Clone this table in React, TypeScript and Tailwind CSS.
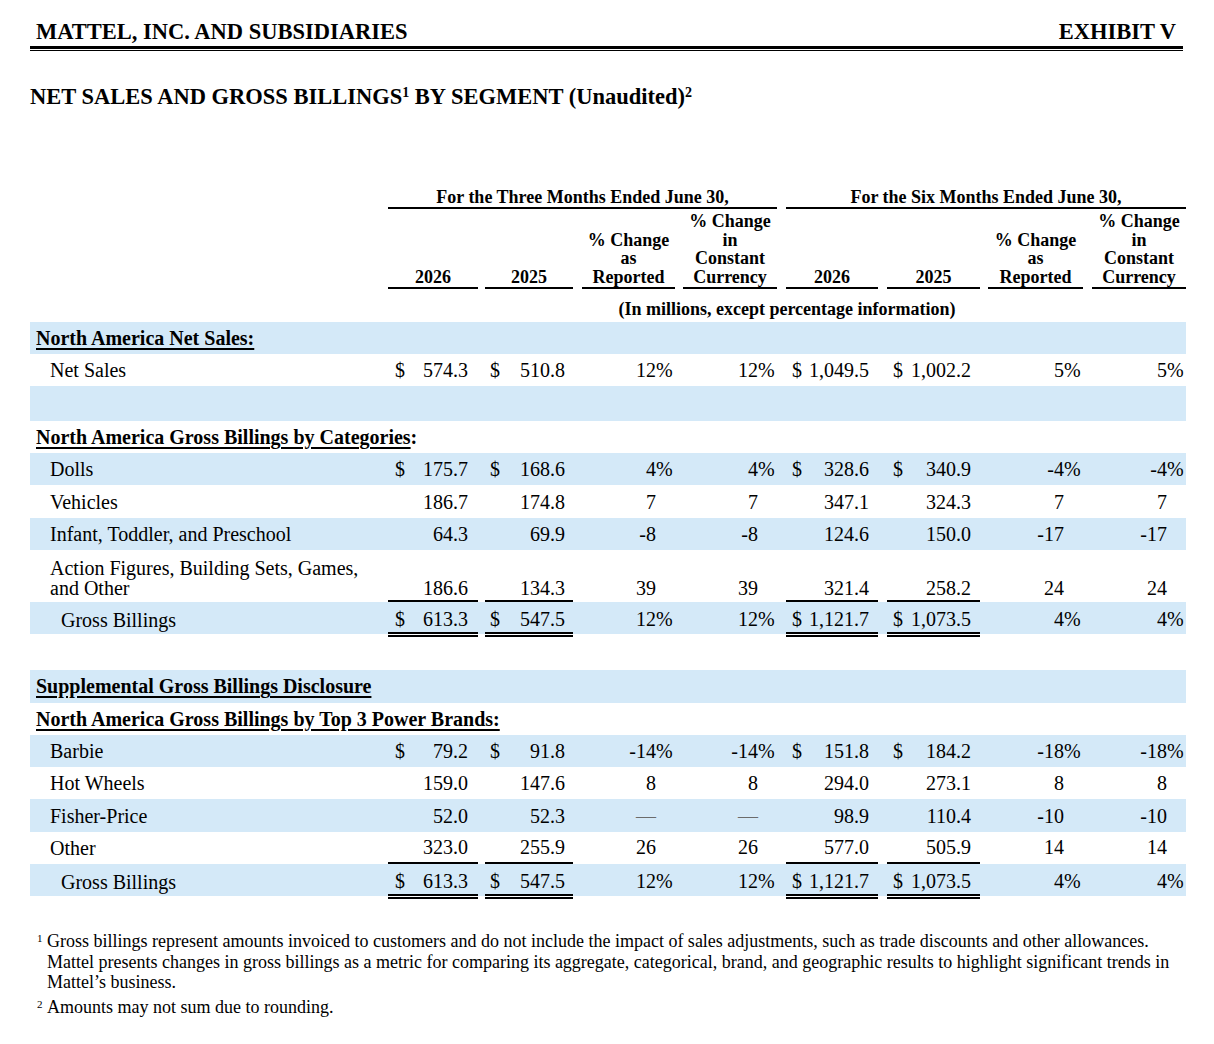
const SHADE = "bg-[#d4e9f8]";

// column boxes (width + gap before) measured from the statement grid
const colCls = [
  "w-[90px]",
  "ml-[7px] w-[88px]",
  "ml-[9px] w-[93px]",
  "ml-[8px] w-[94px]",
  "ml-[9px] w-[92px]",
  "ml-[9px] w-[93px]",
  "ml-[8px] w-[95px]",
  "ml-[9px] w-[94px]",
];
const moneyPad = ["pl-[7px] pr-[10px]", "pl-[5px] pr-[8px]", "", "", "pl-[6px] pr-[9px]", "pl-[6px] pr-[9px]", "", ""];
const isMoney = [true, true, false, false, true, true, false, false];

type Kind = "section" | "item" | "total" | "empty" | "spacer";

type Row = {
  kind: Kind;
  label?: React.ReactNode;
  vals?: string[];
  dollar?: boolean;
  shade?: boolean;
  rule?: "under" | "double";
  tall?: boolean;
};

const gb = ["613.3", "547.5", "12%", "12%", "1,121.7", "1,073.5", "4%", "4%"];

const rows: Row[] = [
  { kind: "section", shade: true, label: <span className="underline">North America Net Sales:</span> },
  { kind: "item", label: "Net Sales", dollar: true, vals: ["574.3", "510.8", "12%", "12%", "1,049.5", "1,002.2", "5%", "5%"] },
  { kind: "empty", shade: true },
  {
    kind: "section",
    label: (
      <>
        <span className="underline">North America Gross Billings by Categories</span>:
      </>
    ),
  },
  { kind: "item", shade: true, label: "Dolls", dollar: true, vals: ["175.7", "168.6", "4%", "4%", "328.6", "340.9", "-4%", "-4%"] },
  { kind: "item", label: "Vehicles", vals: ["186.7", "174.8", "7", "7", "347.1", "324.3", "7", "7"] },
  { kind: "item", shade: true, label: "Infant, Toddler, and Preschool", vals: ["64.3", "69.9", "-8", "-8", "124.6", "150.0", "-17", "-17"] },
  {
    kind: "item",
    tall: true,
    rule: "under",
    label: (
      <>
        Action Figures, Building Sets, Games,
        <br />
        and Other
      </>
    ),
    vals: ["186.6", "134.3", "39", "39", "321.4", "258.2", "24", "24"],
  },
  { kind: "total", shade: true, label: "Gross Billings", dollar: true, rule: "double", vals: gb },
  { kind: "spacer" },
  { kind: "section", shade: true, label: <span className="underline">Supplemental Gross Billings Disclosure</span> },
  { kind: "section", label: <span className="underline">North America Gross Billings by Top 3 Power Brands:</span> },
  { kind: "item", shade: true, label: "Barbie", dollar: true, vals: ["79.2", "91.8", "-14%", "-14%", "151.8", "184.2", "-18%", "-18%"] },
  { kind: "item", label: "Hot Wheels", vals: ["159.0", "147.6", "8", "8", "294.0", "273.1", "8", "8"] },
  { kind: "item", shade: true, label: "Fisher-Price", vals: ["52.0", "52.3", "—", "—", "98.9", "110.4", "-10", "-10"] },
  { kind: "item", label: "Other", rule: "under", vals: ["323.0", "255.9", "26", "26", "577.0", "505.9", "14", "14"] },
  { kind: "total", shade: true, label: "Gross Billings", dollar: true, rule: "double", vals: gb },
];

function ValueCell({ i, v, dollar, rule, tall }: { i: number; v: string; dollar?: boolean; rule?: string; tall?: boolean }) {
  if (isMoney[i]) {
    let ruleCls = "";
    if (rule === "under") ruleCls = tall ? "items-end border-b-2 border-black pb-[2px]" : "items-center border-b-2 border-black";
    else if (rule === "double") ruleCls = "items-center mb-[-3px] border-b-[5px] border-double border-black pt-[4px]";
    else ruleCls = tall ? "items-end pb-[4px]" : "items-center";
    return (
      <div className={`${colCls[i]} flex shrink-0 self-stretch justify-between ${moneyPad[i]} ${ruleCls}`}>
        <span>{dollar ? "$" : ""}</span>
        <span>{v}</span>
      </div>
    );
  }
  const pct = v.endsWith("%");
  const num = pct ? v.slice(0, -1) : v;
  // keep pct figures on the same baseline as the ruled money cells
  let pad = tall ? "items-end pb-[4px]" : "items-center";
  if (!tall && rule === "under") pad = "items-center pb-[2px]";
  if (rule === "double") pad = "items-center pt-[4px] pb-[2px]";
  return (
    <div className={`${colCls[i]} flex shrink-0 self-stretch justify-end ${pad}`}>
      <span className={num === "—" ? "text-[#6b6b6b]" : ""}>{num}</span>
      <span className="w-[19px] text-left">{pct ? "%" : ""}</span>
    </div>
  );
}

function TableRow({ row }: { row: Row }) {
  const bg = row.shade ? SHADE : "";
  if (row.kind === "empty") return <div className={`h-[34.5px] ${bg}`} />;
  if (row.kind === "spacer") return <div className="h-[36px]" />;
  if (row.kind === "section") {
    return (
      <div className={`flex h-[32.3px] items-center whitespace-nowrap pl-[6px] font-bold decoration-[1.5px] underline-offset-[3px] ${bg}`}>
        {row.label}
      </div>
    );
  }
  const align = row.tall ? "items-end pb-[4px]" : "items-center";
  const labelPad = row.kind === "total" ? "pl-[31px] pt-[3px]" : "pl-[20px]";
  return (
    <div className={`flex ${row.tall ? "h-[52px]" : "h-[32.3px]"} ${bg}`}>
      <div className={`flex w-[358px] shrink-0 self-stretch ${align} ${labelPad}`}>
        <div>{row.label}</div>
      </div>
      {row.vals!.map((v, i) => (
        <ValueCell key={i} i={i} v={v} dollar={row.dollar} rule={row.rule} tall={row.tall} />
      ))}
    </div>
  );
}

const heads: React.ReactNode[] = [
  "2026",
  "2025",
  <>% Change<br />as<br />Reported</>,
  <>% Change<br />in<br />Constant<br />Currency</>,
  "2026",
  "2025",
  <>% Change<br />as<br />Reported</>,
  <>% Change<br />in<br />Constant<br />Currency</>,
];

export default function App() {
  return (
    <div className="min-h-[1044px] w-[1214px] bg-white font-['Liberation_Serif','Times_New_Roman',serif] text-black">
      <div className="ml-[30px] w-[1153px] pt-[18px]">
        <div className="flex justify-between px-[6px] pr-[7px] text-[22.5px] font-bold leading-[27px]">
          <span>MATTEL, INC. AND SUBSIDIARIES</span>
          <span>EXHIBIT V</span>
        </div>
        <div className="mt-[1px] h-[3px] bg-black" />
        <div className="mt-[1px] h-[1px] bg-black" />
      </div>

      <h1 className="ml-[30px] mt-[33px] text-[22.5px] font-bold leading-[26px]">
        NET SALES AND GROSS BILLINGS<sup className="text-[14px]">1</sup> BY SEGMENT (Unaudited)
        <sup className="text-[14px]">2</sup>
      </h1>

      <div className="ml-[30px] w-[1156px]">
        <div className="mt-[77px] flex text-[18px] font-bold leading-[20px]">
          <div className="w-[358px] shrink-0" />
          <div className="w-[389px] shrink-0 border-b-2 border-black text-center">For the Three Months Ended June 30,</div>
          <div className="ml-[9px] w-[400px] shrink-0 border-b-2 border-black text-center">For the Six Months Ended June 30,</div>
        </div>
        <div className="mt-[3px] flex items-end text-[18px] font-bold leading-[18.67px]">
          <div className="w-[358px] shrink-0" />
          {heads.map((h, i) => (
            <div key={i} className={`${colCls[i]} shrink-0 border-b-2 border-black text-center`}>
              {h}
            </div>
          ))}
        </div>
        <div className="mt-[10px] flex text-[18px] font-bold leading-[20px]">
          <div className="w-[358px] shrink-0" />
          <div className="flex-1 text-center">(In millions, except percentage information)</div>
        </div>

        <div className="mt-[3px] text-[20px] leading-[20px]">
          {rows.map((r, i) => (
            <TableRow key={i} row={r} />
          ))}
        </div>
      </div>

      <div className="ml-[30px] mt-[35px] w-[1170px] whitespace-nowrap text-[18px] leading-[20.5px]">
        <div className="flex">
          <sup className="mt-[7px] w-[17px] pl-[7px] text-[11px] leading-none">1</sup>
          <p>
            Gross billings represent amounts invoiced to customers and do not include the impact of sales adjustments, such as trade discounts and other allowances.
            <br />
            Mattel presents changes in gross billings as a metric for comparing its aggregate, categorical, brand, and geographic results to highlight significant trends in
            <br />
            Mattel’s business.
          </p>
        </div>
        <div className="mt-[4.5px] flex">
          <sup className="mt-[7px] w-[17px] pl-[7px] text-[11px] leading-none">2</sup>
          <p>Amounts may not sum due to rounding.</p>
        </div>
      </div>
    </div>
  );
}
